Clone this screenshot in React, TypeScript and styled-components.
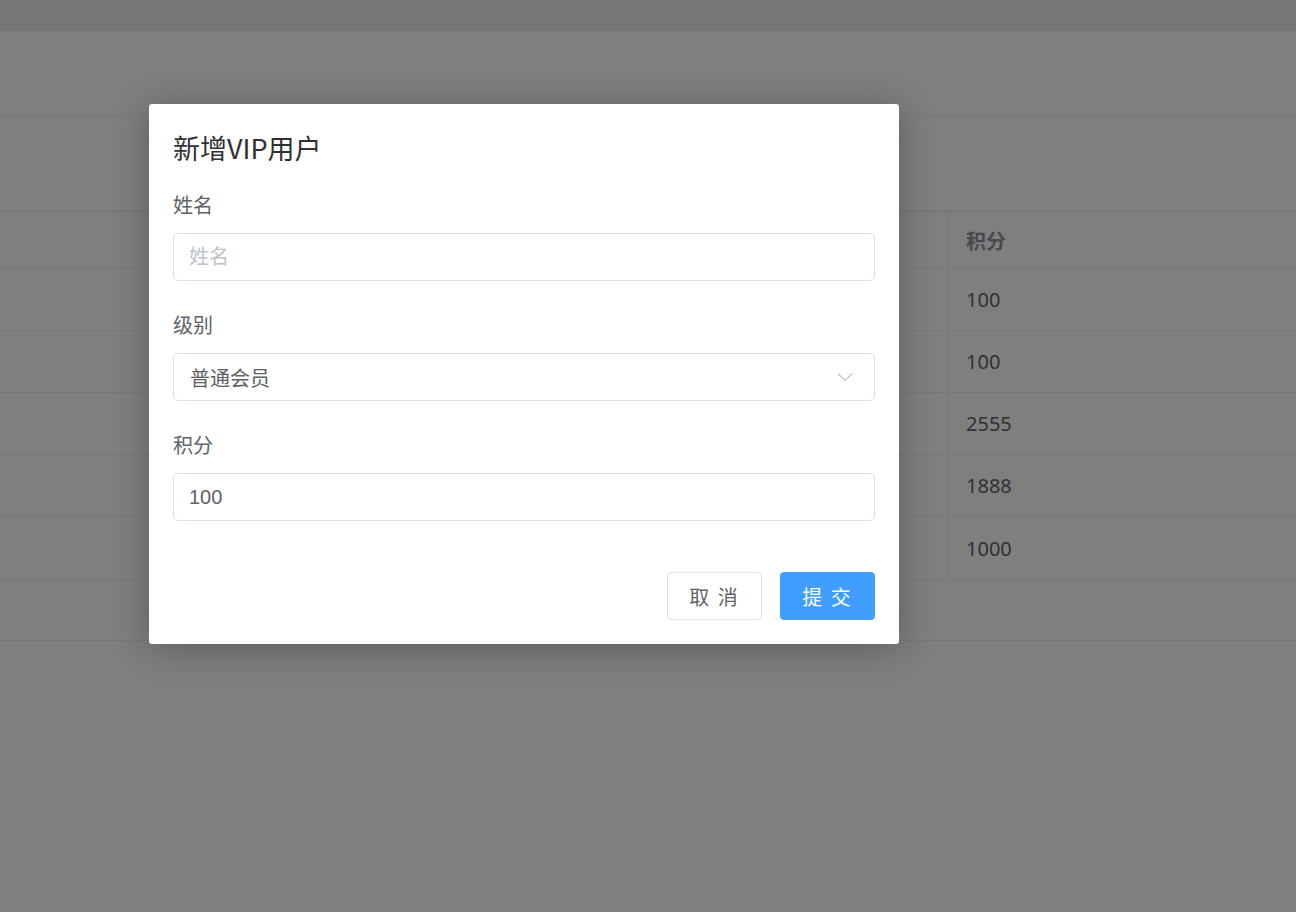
import React from 'react';
import styled, { createGlobalStyle } from 'styled-components';

const GlobalStyle = createGlobalStyle`
  html, body {
    margin: 0;
    padding: 0;
  }
  body {
    font-family: "Noto Sans", "Noto Sans CJK SC", sans-serif;
    background: #fff;
    color: #606266;
  }
`;

const Page = styled.div`
  position: relative;
  width: 100%;
  height: 912px;
  overflow: hidden;
  background: #fff;
`;

const TopBar = styled.div`
  height: 30px;
  background: #eeeeee;
  border-bottom: 1px solid #e4e7ed;
`;

const Section = styled.div<{ h: number; thick?: boolean }>`
  height: ${p => p.h}px;
  border-bottom: ${p => (p.thick ? 2 : 1)}px solid #ebeef5;
`;

const Table = styled.div`
  display: grid;
  grid-template-columns: 947px 1fr;
  border-bottom: 1px solid #ebeef5;
`;

const Cell = styled.div<{ head?: boolean; h: number; last?: boolean; divider?: boolean }>`
  height: ${p => p.h}px;
  display: flex;
  align-items: center;
  padding-left: 18px;
  box-sizing: border-box;
  border-bottom: ${p => (p.last ? 0 : 1)}px solid #ebeef5;
  border-left: ${p => (p.divider ? '1px solid #ebeef5' : 'none')};
  font-size: 20px;
  font-weight: ${p => (p.head ? 700 : 400)};
  color: ${p => (p.head ? '#909399' : '#606266')};
`;

const Footer = styled.div`
  height: 60px;
  border-bottom: 1px solid #ebeef5;
`;

const Overlay = styled.div`
  position: absolute;
  inset: 0;
  background: rgba(0, 0, 0, 0.5);
  display: flex;
  align-items: flex-start;
  padding: 104px 0 0 149px;
`;

const Dialog = styled.div`
  width: 750px;
  box-sizing: border-box;
  background: #fff;
  border-radius: 3px;
  box-shadow: 0 4px 36px rgba(0, 0, 0, 0.28);
  padding: 29px 24px 24px;
`;

const Title = styled.div`
  font-family: "Noto Sans CJK SC", sans-serif;
  font-size: 27px;
  line-height: 30px;
  color: #303133;
  margin-bottom: 31px;
`;

const FormItem = styled.div`
  margin-bottom: 33px;
  &:last-of-type {
    margin-bottom: 0;
  }
`;

const Label = styled.label`
  display: block;
  font-size: 20px;
  line-height: 24px;
  color: #606266;
  margin-bottom: 15px;
`;

const TextInput = styled.input`
  display: block;
  width: 100%;
  height: 48px;
  box-sizing: border-box;
  border: 1px solid #dcdfe6;
  border-radius: 5px;
  padding: 0 15px;
  font-family: "Liberation Sans", "Noto Sans CJK SC", sans-serif;
  font-size: 20px;
  color: #606266;
  outline: none;
  &::placeholder {
    color: #c0c4cc;
    font-family: "Noto Sans", "Noto Sans CJK SC", sans-serif;
  }
`;

const SelectBox = styled.div`
  height: 48px;
  box-sizing: border-box;
  border: 1px solid #dcdfe6;
  border-radius: 5px;
  padding: 0 21px 0 16px;
  display: flex;
  align-items: center;
  justify-content: space-between;
  font-size: 20px;
  color: #606266;
`;

const Actions = styled.div`
  display: flex;
  justify-content: flex-end;
  gap: 18px;
  margin-top: 51px;
`;

const Button = styled.button<{ primary?: boolean }>`
  width: 95px;
  height: 48px;
  border-radius: 4px;
  font-family: "Noto Sans CJK SC", sans-serif;
  font-size: 20px;
  letter-spacing: 2px;
  cursor: pointer;
  border: 1px solid ${p => (p.primary ? '#409eff' : '#dcdfe6')};
  background: ${p => (p.primary ? '#409eff' : '#fff')};
  color: ${p => (p.primary ? '#fff' : '#606266')};
`;

const Chevron = () => (
  <svg width="16" height="10" viewBox="0 0 16 10" fill="none">
    <polyline points="1,1.5 8,8.5 15,1.5" stroke="#c0c4cc" strokeWidth="1.2" />
  </svg>
);

const points = [100, 100, 2555, 1888, 1000];

export default function App() {
  return (
    <Page>
      <GlobalStyle />
      <TopBar />
      <Section h={85} />
      <Section h={93} thick />
      <Table>
        <Cell h={57} />
        <Cell h={57} head divider>积分</Cell>
        {points.map((v, i) => (
          <React.Fragment key={i}>
            <Cell h={62} last={i === points.length - 1} />
            <Cell h={62} divider last={i === points.length - 1}>{v}</Cell>
          </React.Fragment>
        ))}
      </Table>
      <Footer />

      <Overlay>
        <Dialog>
          <Title>新增VIP用户</Title>
          <FormItem>
            <Label>姓名</Label>
            <TextInput placeholder="姓名" />
          </FormItem>
          <FormItem>
            <Label>级别</Label>
            <SelectBox>
              <span>普通会员</span>
              <Chevron />
            </SelectBox>
          </FormItem>
          <FormItem>
            <Label>积分</Label>
            <TextInput defaultValue="100" />
          </FormItem>
          <Actions>
            <Button>取 消</Button>
            <Button primary>提 交</Button>
          </Actions>
        </Dialog>
      </Overlay>
    </Page>
  );
}
